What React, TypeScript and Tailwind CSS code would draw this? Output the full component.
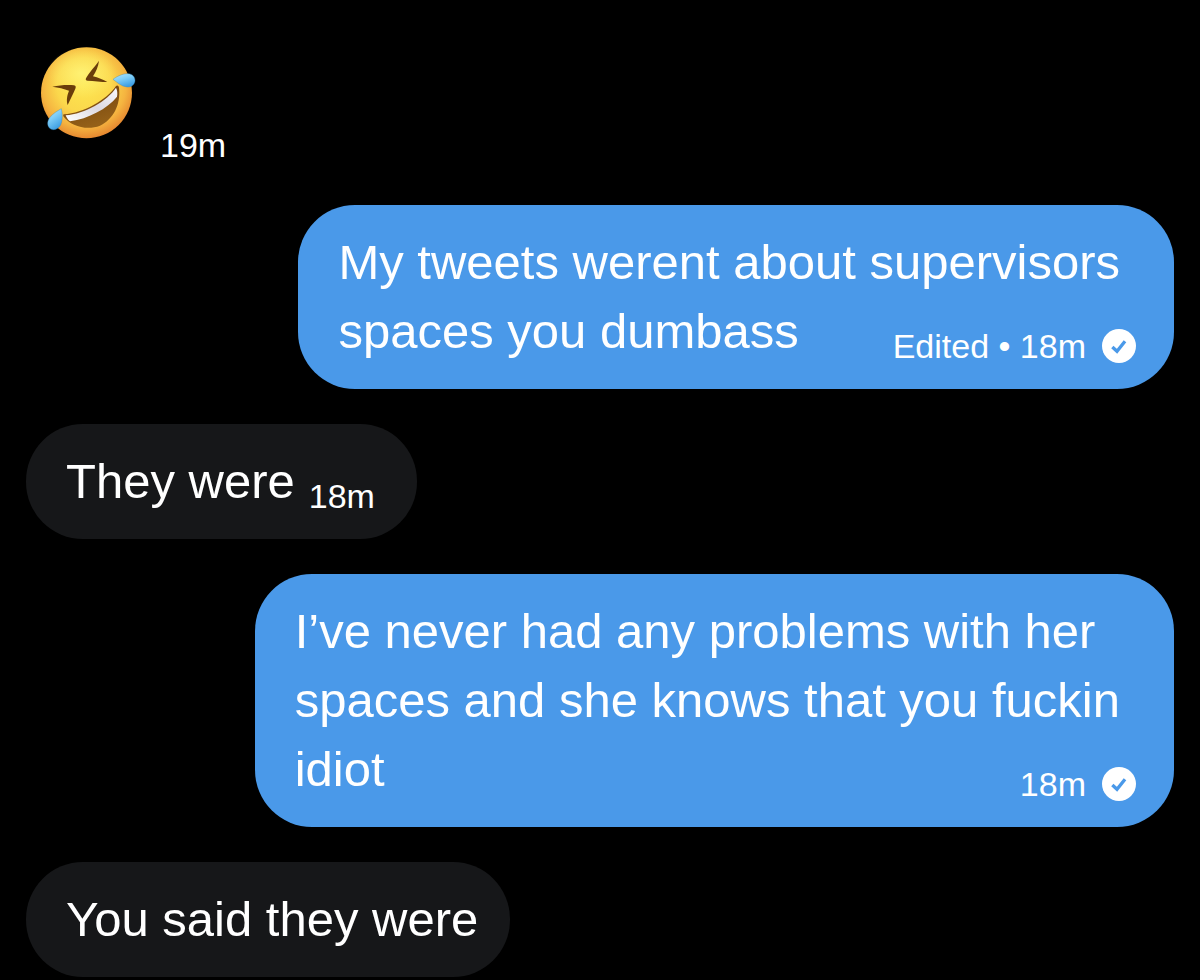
import clsx from 'clsx';

type Message = {
  id: number;
  from: 'me' | 'them';
  lines?: string[];
  emoji?: boolean;
  time?: string;
  edited?: boolean;
};

const messages: Message[] = [
  { id: 1, from: 'them', emoji: true, time: '19m' },
  {
    id: 2,
    from: 'me',
    lines: ['My tweets werent about supervisors', 'spaces you dumbass'],
    time: '18m',
    edited: true,
  },
  { id: 3, from: 'them', lines: ['They were'], time: '18m' },
  {
    id: 4,
    from: 'me',
    lines: ['I’ve never had any problems with her', 'spaces and she knows that you fuckin', 'idiot'],
    time: '18m',
  },
  { id: 5, from: 'them', lines: ['You said they were'] },
];

function RoflEmoji() {
  return (
    <svg viewBox="60 48 288 279" className="h-[93px] w-24 shrink-0" role="img" aria-label="Rolling on the floor laughing">
      <defs>
        <radialGradient id="face" gradientUnits="userSpaceOnUse" cx="192" cy="165" r="162">
          <stop offset="0" stopColor="#fde64f" />
          <stop offset="0.5" stopColor="#fbd84c" />
          <stop offset="0.78" stopColor="#f5b440" />
          <stop offset="1" stopColor="#e5852f" />
        </radialGradient>
        <radialGradient id="shine">
          <stop offset="0" stopColor="#fff67c" stopOpacity="0.8" />
          <stop offset="1" stopColor="#fff07a" stopOpacity="0" />
        </radialGradient>
        <linearGradient id="mouth" x1="0" y1="0" x2="0.4" y2="1">
          <stop offset="0" stopColor="#6b3d0c" />
          <stop offset="1" stopColor="#946018" />
        </linearGradient>
        <linearGradient id="teeth" x1="0" y1="1" x2="1" y2="0">
          <stop offset="0" stopColor="#ffffff" />
          <stop offset="0.5" stopColor="#dcd9e2" />
          <stop offset="1" stopColor="#f8f7fb" />
        </linearGradient>
        <linearGradient id="tear" x1="0" y1="0" x2="0.5" y2="1">
          <stop offset="0" stopColor="#b5e8fc" />
          <stop offset="0.5" stopColor="#7cccf7" />
          <stop offset="1" stopColor="#3f9fe3" />
        </linearGradient>
      </defs>
      <circle cx="199.5" cy="188.5" r="136.5" fill="url(#face)" />
      <ellipse cx="185" cy="130" rx="105" ry="75" fill="url(#shine)" />
      <path
        d="M237 92C227 107 205 130 198 145C196 150 198 152 203 152C220 153 245 156 262 156C250 149 234 143 219 139C228 125 235 110 237 92Z"
        fill="#6a3d0b"
      />
      <path
        d="M97 170C120 165 145 164 162 166C168 167 168 171 166 176C160 190 151 208 143 225C138 210 142 195 147 182C132 176 115 172 97 170Z"
        fill="#6a3d0b"
      />
      <path
        d="M132 253C190 250 262 208 288 168C292 164 296 167 297 173C303 225 279 268 240 287C199 303 152 287 131 260C129 256 129 254 132 253Z"
        fill="url(#mouth)"
      />
      <path d="M137 256C195 251 262 213 288 173C292 180 293 190 291 200C262 236 205 266 150 274C143 269 139 262 137 256Z" fill="url(#teeth)" />
      <path
        d="M279 148C295 136 312 130 327 131C340 133 346 144 345 153C343 166 332 172 321 171C303 169 293 158 279 148Z"
        fill="url(#tear)"
        stroke="#2f7fb5"
        strokeWidth="1"
      />
      <path
        d="M124 236C128 252 128 272 122 285C114 299 98 303 89 295C80 286 82 272 90 262C99 250 112 243 124 236Z"
        fill="url(#tear)"
        stroke="#2f7fb5"
        strokeWidth="1"
      />
    </svg>
  );
}

function ReadBadge() {
  return (
    <svg viewBox="0 0 102 102" className="size-[34px] shrink-0" role="img" aria-label="Read">
      <circle cx="51" cy="51" r="51" fill="#fff" />
      <path d="M31 54L45 67L69 37" fill="none" stroke="#4a99e9" strokeWidth="10" />
    </svg>
  );
}

function Meta({ message }: { message: Message }) {
  return (
    <div className="flex items-center gap-4 text-[34px] leading-10 whitespace-nowrap">
      <span>
        {message.edited && 'Edited • '}
        <time>{message.time}</time>
      </span>
      {message.from === 'me' && <ReadBadge />}
    </div>
  );
}

function Bubble({ message }: { message: Message }) {
  const mine = message.from === 'me';

  if (message.emoji) {
    return (
      <li className="flex items-start gap-6 self-start pb-[5px] pl-3.5">
        <RoflEmoji />
        <div className="pt-[79px]">
          <Meta message={message} />
        </div>
      </li>
    );
  }

  const lines = message.lines ?? [];

  return (
    <li
      className={clsx(
        'max-w-[85%] rounded-[57px] py-[23px] pl-10 text-[49px] leading-[69px]',
        mine ? 'self-end bg-[#4a99e9] pr-[38px]' : 'self-start bg-[#161719] pr-8'
      )}
    >
      {lines.slice(0, -1).map((line) => (
        <p key={line} className="pr-4">
          {line}
        </p>
      ))}
      {/* the time shares a row with the last line */}
      <div className="flex items-end justify-between gap-3.5">
        <p>{lines[lines.length - 1]}</p>
        {message.time && (
          <div className={clsx(!mine && 'pr-2.5')}>
            <Meta message={message} />
          </div>
        )}
      </div>
    </li>
  );
}

export default function App() {
  return (
    <main className="min-h-screen bg-black px-[26px] pt-[46px] font-['Liberation_Sans',Arial,sans-serif] text-white">
      <ul className="flex flex-col gap-[35px]">
        {messages.map((message) => (
          <Bubble key={message.id} message={message} />
        ))}
      </ul>
    </main>
  );
}
